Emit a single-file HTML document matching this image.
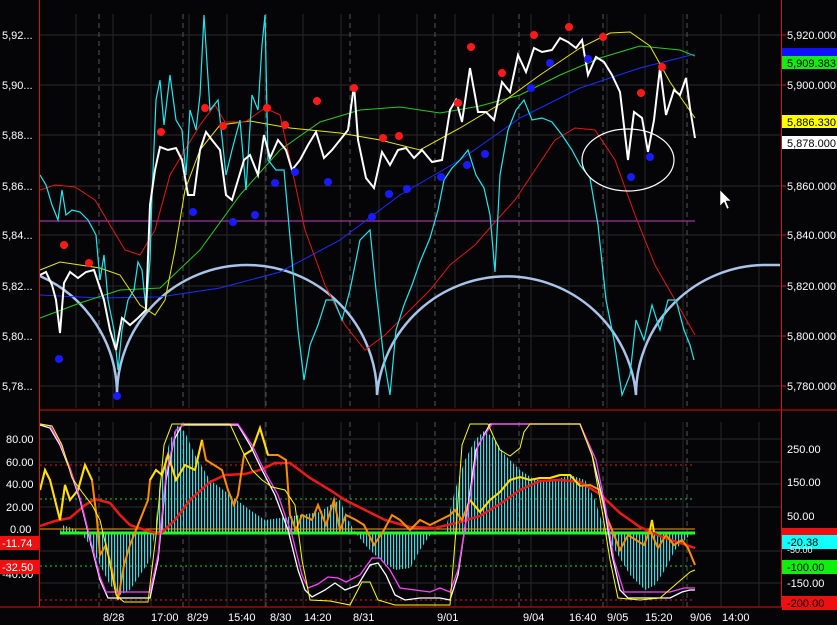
<!DOCTYPE html>
<html><head><style>
html,body{margin:0;padding:0;background:#050508;}
svg{display:block;font-family:"Liberation Sans",sans-serif;}
</style></head><body>
<svg width="837" height="625" viewBox="0 0 837 625" xmlns="http://www.w3.org/2000/svg">
<defs>
<pattern id="st" width="3" height="10" patternUnits="userSpaceOnUse"><rect x="0" y="0" width="1.2" height="10" fill="#3fd8e0"/></pattern>
</defs>
<rect width="837" height="625" fill="#050508"/>
<g stroke="#2a2a2a" stroke-width="1">
<line x1="40" y1="35" x2="781" y2="35"/><line x1="40" y1="85" x2="781" y2="85"/><line x1="40" y1="135" x2="781" y2="135"/><line x1="40" y1="186" x2="781" y2="186"/><line x1="40" y1="235" x2="781" y2="235"/><line x1="40" y1="286" x2="781" y2="286"/><line x1="40" y1="336" x2="781" y2="336"/><line x1="40" y1="386" x2="781" y2="386"/>
<line x1="40" y1="439" x2="781" y2="439"/><line x1="40" y1="462" x2="781" y2="462"/><line x1="40" y1="484" x2="781" y2="484"/><line x1="40" y1="507" x2="781" y2="507"/><line x1="40" y1="551" x2="781" y2="551"/><line x1="40" y1="583" x2="781" y2="583"/>
</g>
<g stroke="#262626">
<line x1="76" y1="14" x2="76" y2="408"/><line x1="113" y1="14" x2="113" y2="408"/><line x1="151" y1="14" x2="151" y2="408"/><line x1="189" y1="14" x2="189" y2="408"/><line x1="227" y1="14" x2="227" y2="408"/><line x1="265" y1="14" x2="265" y2="408"/><line x1="303" y1="14" x2="303" y2="408"/><line x1="341" y1="14" x2="341" y2="408"/><line x1="379" y1="14" x2="379" y2="408"/><line x1="417" y1="14" x2="417" y2="408"/><line x1="455" y1="14" x2="455" y2="408"/><line x1="493" y1="14" x2="493" y2="408"/><line x1="531" y1="14" x2="531" y2="408"/><line x1="569" y1="14" x2="569" y2="408"/><line x1="607" y1="14" x2="607" y2="408"/><line x1="645" y1="14" x2="645" y2="408"/><line x1="683" y1="14" x2="683" y2="408"/><line x1="721" y1="14" x2="721" y2="408"/><line x1="759" y1="14" x2="759" y2="408"/>
<line x1="76" y1="422" x2="76" y2="607"/><line x1="113" y1="422" x2="113" y2="607"/><line x1="151" y1="422" x2="151" y2="607"/><line x1="189" y1="422" x2="189" y2="607"/><line x1="227" y1="422" x2="227" y2="607"/><line x1="265" y1="422" x2="265" y2="607"/><line x1="303" y1="422" x2="303" y2="607"/><line x1="341" y1="422" x2="341" y2="607"/><line x1="379" y1="422" x2="379" y2="607"/><line x1="417" y1="422" x2="417" y2="607"/><line x1="455" y1="422" x2="455" y2="607"/><line x1="493" y1="422" x2="493" y2="607"/><line x1="531" y1="422" x2="531" y2="607"/><line x1="569" y1="422" x2="569" y2="607"/><line x1="607" y1="422" x2="607" y2="607"/><line x1="645" y1="422" x2="645" y2="607"/><line x1="683" y1="422" x2="683" y2="607"/><line x1="721" y1="422" x2="721" y2="607"/><line x1="759" y1="422" x2="759" y2="607"/>
</g>
<g stroke="#555" stroke-dasharray="5,4">
<line x1="99" y1="14" x2="99" y2="408"/><line x1="183" y1="14" x2="183" y2="408"/><line x1="266" y1="14" x2="266" y2="408"/><line x1="350" y1="14" x2="350" y2="408"/><line x1="435" y1="14" x2="435" y2="408"/><line x1="519" y1="14" x2="519" y2="408"/><line x1="603" y1="14" x2="603" y2="408"/><line x1="687" y1="14" x2="687" y2="408"/>
<line x1="99" y1="422" x2="99" y2="607"/><line x1="183" y1="422" x2="183" y2="607"/><line x1="266" y1="422" x2="266" y2="607"/><line x1="350" y1="422" x2="350" y2="607"/><line x1="435" y1="422" x2="435" y2="607"/><line x1="519" y1="422" x2="519" y2="607"/><line x1="603" y1="422" x2="603" y2="607"/><line x1="687" y1="422" x2="687" y2="607"/>
</g>
<line x1="40" y1="221" x2="695" y2="221" stroke="#c040c0" stroke-width="1"/>
<path d="M40,276 A130,130 0 0 1 117,395 A130,130 0 0 1 377,395 A130,130 0 0 1 636,395 A130,130 0 0 1 766,265 L780,265" fill="none" stroke="#a8c4e8" stroke-width="2.5"/>
<polyline fill="none" stroke="#1a2cff" stroke-width="1" points="40,295 100,298 160,297 220,288 280,272 340,240 400,195 460,160 520,118 580,88 640,68 695,54"/>
<polyline fill="none" stroke="#22cc22" stroke-width="1" points="40,318 80,303 120,290 160,288 200,250 240,195 280,150 320,122 360,110 400,107 440,113 480,106 520,95 560,75 600,58 640,46 680,50 695,56"/>
<polyline fill="none" stroke="#e8e800" stroke-width="1" points="40,270 60,262 80,265 100,268 120,275 140,305 155,315 165,300 175,250 185,190 200,150 220,125 250,121 290,128 340,133 380,140 420,150 460,128 500,104 540,75 580,48 610,33 630,32 650,46 670,82 695,118"/>
<polyline fill="none" stroke="#e01818" stroke-width="1" points="40,190 55,185 75,187 95,200 110,225 125,250 140,255 155,230 170,175 185,150 200,125 215,105 225,122 245,122 265,108 280,115 290,160 305,230 325,285 345,325 365,350 385,335 405,315 430,290 450,265 475,245 495,222 515,200 535,170 555,140 575,128 595,130 615,160 635,215 655,265 675,300 695,335"/>
<polyline fill="none" stroke="#1ee8ee" stroke-width="1.2" points="40,175 46,185 52,205 58,220 62,190 66,215 72,210 80,212 88,220 96,235 100,280 104,255 108,300 114,330 118,370 122,330 128,300 134,290 138,262 142,270 146,310 150,260 152,195 156,100 160,80 164,125 170,75 176,120 182,130 186,175 190,110 196,130 200,95 204,15 210,110 218,100 226,175 232,150 240,120 246,190 252,95 258,110 262,45 265,15 268,160 276,170 284,170 292,260 298,330 304,380 310,345 318,325 326,300 334,300 342,320 350,290 360,240 370,230 376,290 384,360 390,395 396,330 404,305 412,285 420,262 430,238 438,210 444,180 452,168 460,160 468,150 476,175 484,188 490,215 495,272 500,175 508,130 516,110 524,100 532,120 542,118 552,122 562,135 572,150 580,165 590,178 598,225 606,300 614,340 622,395 630,375 636,320 644,340 652,305 660,330 668,300 676,300 684,330 690,345 694,360"/>
<polyline fill="none" stroke="#ffffff" stroke-width="2" points="40,275 46,272 52,285 56,300 60,333 64,283 70,272 78,278 86,272 94,270 98,282 104,300 110,330 116,350 122,318 130,325 138,318 146,310 150,205 155,170 160,147 168,150 176,148 182,160 188,195 194,195 200,150 206,132 212,140 220,150 226,195 232,200 238,180 244,160 250,155 258,175 264,135 270,158 278,140 286,150 292,170 300,160 308,145 316,132 324,158 332,150 340,140 348,130 354,85 358,140 366,178 374,188 382,152 390,165 398,150 406,148 414,158 422,150 432,162 442,160 450,110 456,100 462,122 470,68 478,112 486,112 494,120 502,82 510,92 518,55 526,72 534,48 542,52 552,50 560,38 568,42 576,48 582,40 588,75 596,57 604,62 612,75 620,92 628,160 634,112 642,118 648,152 654,120 660,68 666,115 674,90 680,95 686,78 690,108 695,138"/>
<g fill="#ff1a1a">
<circle cx="64" cy="245" r="4"/><circle cx="89" cy="263" r="4"/><circle cx="161" cy="132" r="4"/><circle cx="205" cy="108" r="4"/><circle cx="223" cy="126" r="4"/><circle cx="267" cy="108" r="4"/><circle cx="285" cy="125" r="4"/><circle cx="317" cy="101" r="4"/><circle cx="354" cy="88" r="4"/><circle cx="383" cy="138" r="4"/><circle cx="399" cy="136" r="4"/><circle cx="458" cy="103" r="4"/><circle cx="471" cy="47" r="4"/><circle cx="502" cy="73" r="4"/><circle cx="534" cy="35" r="4"/><circle cx="569" cy="27" r="4"/><circle cx="603" cy="37" r="4"/><circle cx="641" cy="93" r="4"/><circle cx="662" cy="67" r="4"/>
</g>
<g fill="#1a1aff">
<circle cx="59" cy="359" r="4"/><circle cx="117" cy="396" r="4"/><circle cx="193" cy="212" r="4"/><circle cx="233" cy="222" r="4"/><circle cx="255" cy="215" r="4"/><circle cx="275" cy="183" r="4"/><circle cx="295" cy="172" r="4"/><circle cx="328" cy="182" r="4"/><circle cx="372" cy="217" r="4"/><circle cx="389" cy="194" r="4"/><circle cx="407" cy="189" r="4"/><circle cx="441" cy="177" r="4"/><circle cx="467" cy="165" r="4"/><circle cx="485" cy="154" r="4"/><circle cx="531" cy="88" r="4"/><circle cx="550" cy="63" r="4"/><circle cx="588" cy="59" r="4"/><circle cx="631" cy="177" r="4"/><circle cx="650" cy="157" r="4"/>
</g>
<ellipse cx="628" cy="160" rx="46" ry="31" fill="none" stroke="#ffffff" stroke-width="1.2"/>
<path d="M720,190 L720,206 L724,202 L727,209 L729,208 L726,201 L731,201 Z" fill="#fff" stroke="#000" stroke-width="0.5"/>
<g stroke-dasharray="2,3" stroke-width="1">
<line x1="40" y1="465" x2="695" y2="465" stroke="#d02020"/><line x1="40" y1="600" x2="695" y2="600" stroke="#d02020"/>
<line x1="40" y1="499" x2="695" y2="499" stroke="#20d020"/><line x1="40" y1="566" x2="695" y2="566" stroke="#20d020"/>
</g>
<polygon fill="url(#st)" points="60,532 62,525 72,528 80,532 90,545 100,565 110,585 120,595 130,590 140,575 150,560 155,532 160,480 170,440 178,425 185,432 195,455 210,480 230,495 250,510 265,520 280,518 300,515 320,512 330,505 340,500 348,520 355,532 365,545 380,560 395,570 410,568 420,550 430,535 445,532 455,490 465,460 475,440 485,430 495,440 505,455 520,470 535,480 555,480 570,475 585,480 595,500 605,532 615,550 630,575 645,590 655,585 665,570 675,550 685,540 690,535 695,532"/>
<line x1="40" y1="529" x2="695" y2="529" stroke="#ff9900" stroke-width="1"/>
<line x1="60" y1="533" x2="695" y2="533" stroke="#20ff20" stroke-width="3"/>
<polyline fill="none" stroke="#ee1a1a" stroke-width="2.5" points="40,526 55,521 70,518 85,505 95,499 110,503 120,515 130,525 145,530 160,534 175,520 190,500 210,482 225,475 245,474 260,470 275,463 290,463 310,478 330,490 345,500 365,510 385,520 410,527 435,528 460,522 480,516 500,504 520,490 540,481 560,480 580,482 600,494 620,513 640,527 660,536 680,543 695,548"/>
<polyline fill="none" stroke="#ff8c00" stroke-width="2" points="40,490 45,470 50,480 55,500 60,520 65,485 70,500 78,490 85,465 92,480 97,520 100,555 106,545 112,570 118,600 124,565 130,545 136,530 142,515 148,500 150,480 156,470 162,475 168,455 176,480 185,465 195,470 202,440 206,460 214,465 222,470 228,490 234,505 238,495 244,455 252,450 260,428 268,455 278,455 286,460 290,515 296,530 302,515 312,520 318,505 326,525 334,500 340,530 346,515 356,520 364,525 374,545 384,530 392,515 400,520 410,530 420,520 430,525 440,520 450,515 455,510 462,520 470,500 480,512 490,500 500,492 510,480 520,477 530,480 540,478 550,478 560,475 570,475 580,486 590,485 600,490 606,515 612,530 620,550 628,535 636,540 644,545 650,530 658,548 666,535 674,545 682,540 688,548 695,565"/>
<g fill="none" stroke="#ffe000" stroke-width="2">
<polyline points="40,490 45,470 50,480 55,500 60,520 65,485 70,500 78,490 85,465 92,480"/>
<polyline points="150,480 156,470 162,475 168,455 176,480 185,465 195,470 202,440"/>
<polyline points="244,455 252,450 260,428 268,455"/>
<polyline points="470,500 480,512 490,500 500,492 510,480 520,477 530,480 540,478 550,478 560,475 570,475 580,486"/>
<polyline points="650,530 652,520 654,532"/>
</g>
<polyline fill="none" stroke="#ffffff" stroke-width="1.3" points="40,425 50,428 60,445 70,470 80,500 90,540 100,580 108,598 150,598 158,560 166,480 174,440 182,425 238,425 250,445 262,470 275,495 288,530 298,570 305,590 312,597 325,590 335,583 345,590 358,585 370,565 378,563 386,575 395,595 405,600 420,598 435,598 440,598 450,600 458,575 466,520 476,450 490,424 580,424 592,455 604,505 612,555 620,590 628,598 670,598 682,592 690,590 695,590"/>
<polyline fill="none" stroke="#ff40ff" stroke-width="1.3" points="40,424 50,426 60,443 70,468 80,498 90,538 100,577 106,592 150,592 158,555 166,475 176,430 184,424 238,424 252,445 264,470 278,495 292,535 302,575 308,588 318,584 328,577 338,578 346,582 360,575 372,558 380,558 390,570 400,588 430,592 440,588 450,592 458,570 468,510 478,445 492,424 580,424 596,460 606,510 614,560 624,592 640,592 670,592 684,588 695,588"/>
<polyline fill="none" stroke="#ffff00" stroke-width="1" points="40,424 52,426 62,445 72,478 82,492 92,505 100,520 108,555 116,595 124,602 148,602 156,535 164,445 172,424 230,424 242,450 252,470 262,480 272,487 285,490 295,505 302,560 310,600 330,601 350,605 362,582 370,582 378,600 395,605 450,605 456,530 462,445 470,424 488,424 495,440 500,450 510,456 520,448 524,432 530,424 580,424 592,455 602,510 610,560 618,598 640,600 660,598 675,585 690,572 695,570"/>
<line x1="39.5" y1="0" x2="39.5" y2="607" stroke="#e01010"/>
<line x1="781.5" y1="0" x2="781.5" y2="607" stroke="#e01010"/>
<line x1="40" y1="410" x2="837" y2="410" stroke="#e01010"/>
<line x1="0" y1="607" x2="837" y2="607" stroke="#e01010"/>
<g fill="#fff" font-size="11">
<text x="2" y="39">5,92...</text><text x="2" y="89">5,90...</text><text x="2" y="139">5,88...</text><text x="2" y="190">5,86...</text><text x="2" y="239">5,84...</text><text x="2" y="290">5,82...</text><text x="2" y="340">5,80...</text><text x="2" y="390">5,78...</text>
<text x="6" y="443">80.00</text><text x="6" y="466">60.00</text><text x="6" y="488">40.00</text><text x="6" y="511">20.00</text><text x="10" y="533">0.00</text><text x="2" y="578">-40.00</text>
</g>
<rect x="0" y="536" width="39" height="14" fill="#ee1010"/><text x="2" y="547" fill="#fff" font-size="11">-11.74</text>
<rect x="0" y="560" width="39" height="14" fill="#ee1010"/><text x="2" y="571" fill="#fff" font-size="11">-32.50</text>
<g stroke="#e01010"><line x1="782" y1="35" x2="786" y2="35"/><line x1="782" y1="85" x2="786" y2="85"/><line x1="782" y1="186" x2="786" y2="186"/><line x1="782" y1="235" x2="786" y2="235"/><line x1="782" y1="286" x2="786" y2="286"/><line x1="782" y1="336" x2="786" y2="336"/><line x1="782" y1="386" x2="786" y2="386"/></g>
<g fill="#fff" font-size="11">
<text x="787" y="39">5,920.000</text><text x="787" y="89">5,900.000</text><text x="787" y="190">5,860.000</text><text x="787" y="239">5,840.000</text><text x="787" y="290">5,820.000</text><text x="787" y="340">5,800.000</text><text x="787" y="390">5,780.000</text>
<text x="787" y="453">250.00</text><text x="787" y="486">150.00</text><text x="787" y="520">50.00</text><text x="787" y="587">-150.00</text>
</g>
<rect x="782" y="48" width="55" height="8" fill="#1010ff"/>
<rect x="782" y="56" width="55" height="13" fill="#10ee10"/><text x="787" y="67" fill="#000" font-size="11">5,909.383</text>
<rect x="782" y="115" width="55" height="13" fill="#ffff00"/><text x="787" y="126" fill="#000" font-size="11">5,886.330</text>
<rect x="782" y="136" width="55" height="13" fill="#ffffff"/><text x="787" y="147" fill="#000" font-size="11">5,878.000</text>
<rect x="782" y="528" width="55" height="8" fill="#ee1010"/>
<rect x="782" y="535" width="55" height="14" fill="#10ffff"/><text x="787" y="546" fill="#000" font-size="11">-20.38</text>
<text x="787" y="553" fill="#fff" font-size="9">-50.00</text>
<rect x="782" y="560" width="55" height="14" fill="#10ee10"/><text x="787" y="571" fill="#000" font-size="11">-100.00</text>
<rect x="782" y="596" width="55" height="14" fill="#ee1010"/><text x="787" y="607" fill="#000" font-size="11">-200.00</text>
<g fill="#fff" font-size="11">
<text x="103" y="621">8/28</text><text x="151" y="621">17:00</text><text x="187" y="621">8/29</text><text x="228" y="621">15:40</text><text x="270" y="621">8/30</text><text x="304" y="621">14:20</text><text x="353" y="621">8/31</text><text x="437" y="621">9/01</text><text x="523" y="621">9/04</text><text x="569" y="621">16:40</text><text x="607" y="621">9/05</text><text x="645" y="621">15:20</text><text x="690" y="621">9/06</text><text x="722" y="621">14:00</text>
</g>
</svg>
</body></html>
